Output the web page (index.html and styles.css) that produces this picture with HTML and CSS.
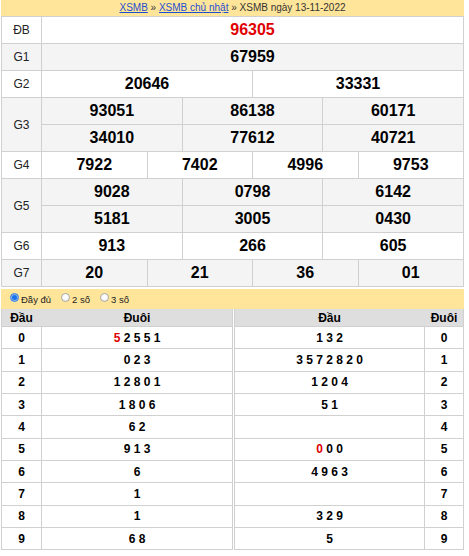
FILE: index.html
```html
<!DOCTYPE html>
<html lang="vi">
<head>
<meta charset="utf-8">
<title>XSMB ngày 13-11-2022</title>
<link rel="stylesheet" href="styles.css">
</head>
<body>
<div class="wrap">
  <div class="title"><a href="#">XSMB</a> » <a href="#">XSMB chủ nhật</a> » XSMB ngày 13-11-2022</div>
  <div class="kq">
    <div class="lbl">ĐB</div><div class="num c12 red">96305</div>
    <div class="lbl alt">G1</div><div class="num c12 alt">67959</div>
    <div class="lbl">G2</div><div class="num c6">20646</div><div class="num c6">33331</div>
    <div class="lbl alt rs2">G3</div>
    <div class="num c4 alt">93051</div><div class="num c4 alt">86138</div><div class="num c4 alt">60171</div>
    <div class="num c4 alt">34010</div><div class="num c4 alt">77612</div><div class="num c4 alt">40721</div>
    <div class="lbl">G4</div>
    <div class="num c3">7922</div><div class="num c3">7402</div><div class="num c3">4996</div><div class="num c3">9753</div>
    <div class="lbl alt rs2">G5</div>
    <div class="num c4 alt">9028</div><div class="num c4 alt">0798</div><div class="num c4 alt">6142</div>
    <div class="num c4 alt">5181</div><div class="num c4 alt">3005</div><div class="num c4 alt">0430</div>
    <div class="lbl">G6</div>
    <div class="num c4">913</div><div class="num c4">266</div><div class="num c4">605</div>
    <div class="lbl alt">G7</div>
    <div class="num c3 alt">20</div><div class="num c3 alt">21</div><div class="num c3 alt">36</div><div class="num c3 alt">01</div>
  </div>
  <div class="opts">
    <span class="radio on"></span><span class="opt">Đầy đủ</span>
    <span class="radio"></span><span class="opt">2 số</span>
    <span class="radio"></span><span class="opt">3 số</span>
  </div>
  <div class="loto">
    <div class="lt left">
      <div class="hd first">Đầu</div><div class="hd">Đuôi</div>
      <div class="c">0</div><div class="c"><span class="red">5</span>&nbsp;2 5 5 1</div>
      <div class="c">1</div><div class="c">0 2 3</div>
      <div class="c">2</div><div class="c">1 2 8 0 1</div>
      <div class="c">3</div><div class="c">1 8 0 6</div>
      <div class="c">4</div><div class="c">6 2</div>
      <div class="c">5</div><div class="c">9 1 3</div>
      <div class="c">6</div><div class="c">6</div>
      <div class="c">7</div><div class="c">1</div>
      <div class="c">8</div><div class="c">1</div>
      <div class="c">9</div><div class="c">6 8</div>
    </div>
    <div class="lt right">
      <div class="hd first">Đầu</div><div class="hd">Đuôi</div>
      <div class="c">1 3 2</div><div class="c">0</div>
      <div class="c">3 5 7 2 8 2 0</div><div class="c">1</div>
      <div class="c">1 2 0 4</div><div class="c">2</div>
      <div class="c">5 1</div><div class="c">3</div>
      <div class="c"></div><div class="c">4</div>
      <div class="c"><span class="red">0</span>&nbsp;0 0</div><div class="c">5</div>
      <div class="c">4 9 6 3</div><div class="c">6</div>
      <div class="c"></div><div class="c">7</div>
      <div class="c">3 2 9</div><div class="c">8</div>
      <div class="c">5</div><div class="c">9</div>
    </div>
  </div>
</div>
</body>
</html>
```
FILE: styles.css
```css
html, body {
  margin: 0;
  padding: 0;
  background: #fff;
}
body {
  font-family: "Liberation Sans", Arial, sans-serif;
  color: #000;
}
.wrap {
  margin-left: 1px;
  width: 463px;
}
.title {
  height: 16px;
  line-height: 16px;
  background: #ffe599;
  text-align: center;
  font-size: 10px;
  color: #333;
}
.title a {
  color: #1f4fd1;
  text-decoration: underline;
}
.kq {
  display: grid;
  grid-template-columns: 39px repeat(12, 1fr);
  grid-auto-rows: 26px;
  gap: 1px;
  padding: 1px;
  background: #d0d0d0;
}
.kq > div {
  background: #fff;
  display: flex;
  align-items: center;
  justify-content: center;
}
.kq > .alt {
  background: #f4f4f4;
}
.lbl {
  font-size: 12px;
  color: #222;
}
.num {
  font-size: 16px;
  font-weight: bold;
}
.c12 { grid-column: span 12; }
.c6 { grid-column: span 6; }
.c4 { grid-column: span 4; }
.c3 { grid-column: span 3; }
.rs2 { grid-row: span 2; }
.red { color: #e00000; }
.opts {
  margin-top: 2px;
  height: 20px;
  background: #ffe599;
  display: flex;
  align-items: center;
  padding-left: 9px;
  font-size: 9.5px;
  color: #222;
}
.radio {
  width: 7px;
  height: 7px;
  border-radius: 50%;
  border: 1px solid #a8a8a8;
  background: radial-gradient(circle at 50% 35%, #fff 30%, #e6e6e6 100%);
  margin-right: 2px;
  margin-top: -3px;
}
.radio.on {
  background: #1a73e8;
  border-color: #4d8fe6;
  box-shadow: inset 0 0 0 1px #8fb8f0;
}
.opt {
  margin-right: 10px;
}
.loto {
  display: flex;
  gap: 1px;
}
.lt {
  display: grid;
  grid-template-rows: 17px;
  grid-auto-rows: 21.33px;
  gap: 1px;
  padding: 0 1px 1px;
  background: #d0d0d0;
}
.left {
  width: 232px;
  box-sizing: border-box;
  grid-template-columns: 39px 190px;
}
.right {
  width: 230px;
  box-sizing: border-box;
  grid-template-columns: 189px 38px;
}
.lt > div {
  background: #fff;
  display: flex;
  align-items: center;
  justify-content: center;
  font-size: 12px;
  font-weight: bold;
}
.lt > .hd {
  background: #dedede;
  font-size: 12px;
}
.lt > .hd.first {
  box-shadow: 1px 0 0 #dedede;
}
```
